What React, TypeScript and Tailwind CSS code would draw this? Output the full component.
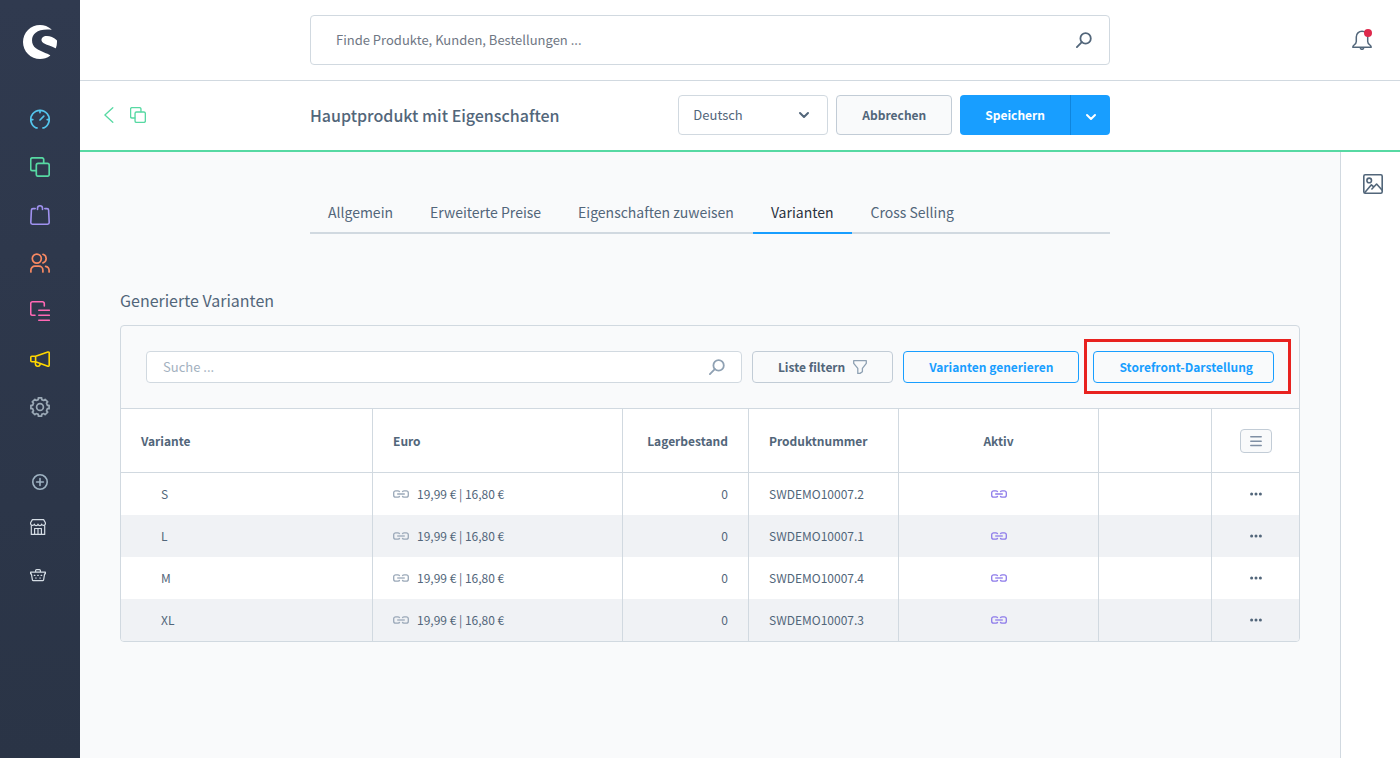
import type { ReactNode } from "react";
import { SiShopware } from "react-icons/si";

type IconProps = { className?: string };

function Svg({ box, className, width = 1.5, children }: { box: string; className?: string; width?: number; children: ReactNode }) {
  return (
    <svg
      viewBox={box}
      className={className}
      fill="none"
      stroke="currentColor"
      strokeWidth={width}
      strokeLinecap="round"
      strokeLinejoin="round"
      aria-hidden="true"
    >
      {children}
    </svg>
  );
}

const GaugeIcon = ({ className }: IconProps) => (
  <Svg box="0 0 20 20" className={className} width={1.7}>
    <path d="M7 18.9H6.2A9.2 9.2 0 1 1 13.8 18.9H13" />
    <path d="M10 1.6v2M1 10.6h1.8M17.2 10.6H19M10 11l3.8-3.8" />
  </Svg>
);

const CopyIcon = ({ className }: IconProps) => (
  <Svg box="0 0 20 20" className={className} width={1.7}>
    <path d="M6 13.7H2.5a1.8 1.8 0 0 1-1.8-1.8V2.5A1.8 1.8 0 0 1 2.5.8h9.4a1.8 1.8 0 0 1 1.8 1.8V6" />
    <rect x="6.3" y="6.3" width="12.9" height="12.9" rx="1.8" />
  </Svg>
);

const BagIcon = ({ className }: IconProps) => (
  <Svg box="0 0 20 20" className={className} width={1.6}>
    <path d="M5.2 3.6H3a1.6 1.6 0 0 0-1.6 1.5L.8 17.6A1.6 1.6 0 0 0 2.4 19.2h15.2a1.6 1.6 0 0 0 1.6-1.6l-.6-12.5A1.6 1.6 0 0 0 17 3.6h-2.2" />
    <path d="M7.5 4.4V3.2A2.5 2.5 0 0 1 10 .8a2.5 2.5 0 0 1 2.5 2.4v1.2" />
  </Svg>
);

const UsersIcon = ({ className }: IconProps) => (
  <Svg box="0 0 20 20" className={className} width={1.7}>
    <circle cx="6.8" cy="5.6" r="4.5" />
    <path d="M.9 19v-1.8a4 4 0 0 1 4-4h4a4 4 0 0 1 4 4V19M13 1.3a4.5 4.5 0 0 1 0 8.6M15.6 13.3a4.3 4.3 0 0 1 3.5 4.2V19" />
  </Svg>
);

const ContentIcon = ({ className }: IconProps) => (
  <Svg box="0 0 20 20" className={className} width={1.6}>
    <path d="M5 14.3H2.5a1.8 1.8 0 0 1-1.8-1.8V2.5A1.8 1.8 0 0 1 2.5.8h10a1.8 1.8 0 0 1 1.8 1.8V5" />
    <path d="M8.8 9.3h10.5M8.8 14.3h10.5M8.8 19.2h10.5" />
  </Svg>
);

const MegaphoneIcon = ({ className }: IconProps) => (
  <Svg box="0 0 20 20" className={className} width={1.6}>
    <path d="M5.6 7.2H1.8a1 1 0 0 0-1 1v3.6a1 1 0 0 0 1 1h3.8zM5.6 7.2 17.9 3a1 1 0 0 1 1.3 1v12.2a1 1 0 0 1-1.3 1L5.6 12.8M5.4 13v1.8a2.4 2.4 0 0 0 4.5 1.2l.2-1.4" />
  </Svg>
);

const GearIcon = ({ className }: IconProps) => (
  <Svg box="0 0 20 20" className={className} width={1.7}>
    <circle cx="10" cy="10" r="3.4" />
    <path d="M8.3.9h3.4v1.7l2.1.9 1.3-1.2 2.6 2.6-1.2 1.3.9 2.1h1.7v3.4h-1.7l-.9 2.1 1.2 1.3-2.6 2.6-1.3-1.2-2.1.9v1.7H8.3v-1.7l-2.1-.9-1.3 1.2-2.6-2.6 1.2-1.3-.9-2.1H.9V8.3h1.7l.9-2.1-1.2-1.3 2.6-2.6 1.3 1.2 2.1-.9z" />
  </Svg>
);

const PlusCircleIcon = ({ className }: IconProps) => (
  <Svg box="0 0 16 16" className={className} width={1.6}>
    <circle cx="8" cy="8" r="7.2" />
    <path d="M8 4.6v6.8M4.6 8h6.8" />
  </Svg>
);

const ShopIcon = ({ className }: IconProps) => (
  <Svg box="0 0 16 16" className={className} width={1.2}>
    <path d="M2.4.6h11.2l1.8 3.2v1a1.9 1.9 0 0 1-3.7.3 1.9 1.9 0 0 1-3.7 0 1.9 1.9 0 0 1-3.7 0A1.9 1.9 0 0 1 .6 4.8v-1zM1.3 7v8.4h13.4V7M4.6 15.4V9.5h6.8v5.9M8 9.5v5.9" />
  </Svg>
);

const BasketIcon = ({ className }: IconProps) => (
  <Svg box="0 0 16 16" className={className} width={1.2}>
    <path d="M.6 5.2h14.8v1.6h-.8l-1 6a1 1 0 0 1-1 .8H3.4a1 1 0 0 1-1-.8l-1-6H.6zM5.6 5V3.6a1 1 0 0 1 1-1h2.8a1 1 0 0 1 1 1V5" />
    <path d="M4.3 8.4h.6M7.7 8.4h.6M11.1 8.4h.6M5.6 11h.6M9.8 11h.6" />
  </Svg>
);

const SearchIcon = ({ className }: IconProps) => (
  <Svg box="0 0 16 16" className={className} width={1.8}>
    <circle cx="9.6" cy="6.4" r="5.2" />
    <path d="M5.8 10.2.9 15.1" />
  </Svg>
);

const BellIcon = ({ className }: IconProps) => (
  <Svg box="0 0 20 20" className={className}>
    <path d="M10 1.2a5.7 5.7 0 0 0-5.7 5.7v4.6c0 1.6-.9 2.5-2.2 3.5-.9.7-1.3 1.2-1.3 2.3h18.4c0-1.1-.4-1.6-1.3-2.3-1.3-1-2.2-1.9-2.2-3.5V6.9A5.7 5.7 0 0 0 10 1.2zM8.3 17.6a1.7 1.7 0 0 0 3.4 0" />
  </Svg>
);

const ImageIcon = ({ className }: IconProps) => (
  <Svg box="0 0 20 20" className={className} width={1.6}>
    <rect x=".8" y=".8" width="18.4" height="18.4" rx="1.4" />
    <circle cx="6.2" cy="6.4" r="2.3" />
    <path d="m1.8 18.4 6.6-7.6 2 1.8M8.9 15l4.7-5 5.4 6" />
  </Svg>
);

const ChevronIcon = ({ className }: IconProps) => (
  <Svg box="0 0 12 8" className={className} width={2}>
    <path d="m2 2 4 4 4-4" />
  </Svg>
);

const BackIcon = ({ className }: IconProps) => (
  <Svg box="0 0 10 16" className={className} width={1.3}>
    <path d="M8.8.8.9 8l7.9 7.2" />
  </Svg>
);

const FilterIcon = ({ className }: IconProps) => (
  <Svg box="0 0 14 14" className={className} width={1.3}>
    <path d="M.7.7h12.6v2.7L9.4 8.4v3.4L7 13.4H4.8v-5L.7 3.4z" />
  </Svg>
);

const LinkIcon = ({ className }: IconProps) => (
  <svg viewBox="0 0 16 8" className={className} fill="none" stroke="currentColor" strokeWidth="1.3" aria-hidden="true">
    <path d="M6.6 2.2A1.6 1.6 0 0 0 5 .8H2.7A2 2 0 0 0 .7 2.8v2.4a2 2 0 0 0 2 2H5a1.6 1.6 0 0 0 1.6-1.4" />
    <path d="M9.4 2.2A1.6 1.6 0 0 1 11 .8h2.3a2 2 0 0 1 2 2v2.4a2 2 0 0 1-2 2H11a1.6 1.6 0 0 1-1.6-1.4" />
    <path d="M4.2 4h7.6" />
  </svg>
);

const mainNav = [
  { label: "Übersicht", icon: GaugeIcon, color: "text-[#54c5ec]" },
  { label: "Kataloge", icon: CopyIcon, color: "text-[#57d9a3]" },
  { label: "Bestellungen", icon: BagIcon, color: "text-[#a092f0]" },
  { label: "Kunden", icon: UsersIcon, color: "text-[#f88962]" },
  { label: "Inhalte", icon: ContentIcon, color: "text-[#ff68b4]" },
  { label: "Marketing", icon: MegaphoneIcon, color: "text-[#ffd700]" },
  { label: "Einstellungen", icon: GearIcon, color: "text-[#9aa8b5]" },
];

const tabs = ["Allgemein", "Erweiterte Preise", "Eigenschaften zuweisen", "Varianten", "Cross Selling"];

const variants = [
  { name: "S", number: "SWDEMO10007.2" },
  { name: "L", number: "SWDEMO10007.1" },
  { name: "M", number: "SWDEMO10007.4" },
  { name: "XL", number: "SWDEMO10007.3" },
];

const headCell = "border-r border-b border-[#d1d9e0] px-5 font-bold last:border-r-0";
const cell = "border-r border-[#d1d9e0] px-5 last:border-r-0";

function Sidebar() {
  return (
    <nav aria-label="Hauptmenü" className="flex w-20 shrink-0 flex-col bg-linear-to-b from-[#303a4f] to-[#2a3446]">
      <a href="#start" aria-label="Startseite" className="flex h-[95px] justify-center pt-[25px] text-white">
        <SiShopware className="size-[34px]" />
      </a>
      {mainNav.map(({ label, icon: Icon, color }) => (
        <a key={label} href={"#" + label} aria-label={label} className={"flex h-12 items-center justify-center " + color}>
          <Icon className="size-5" />
        </a>
      ))}
      <a href="#kanal" aria-label="Verkaufskanal hinzufügen" className="mt-[30px] flex h-[42px] items-center justify-center text-[#9fb3c3]">
        <PlusCircleIcon className="size-4" />
      </a>
      <a href="#shop" aria-label="Shop" className="flex h-12 items-center pl-[30px] text-[#d5dde5]">
        <ShopIcon className="size-4" />
      </a>
      <a href="#headless" aria-label="Headless" className="flex h-12 items-center pl-[30px] text-[#d5dde5]">
        <BasketIcon className="size-4" />
      </a>
    </nav>
  );
}

function TopBar() {
  return (
    <header className="grid h-[81px] grid-cols-[1fr_minmax(0,800px)_1fr_60px] items-center border-b border-[#d1d9e0] bg-white">
      <div className="col-start-2 flex h-[50px] items-center rounded border border-[#d1d9e0] pr-[17px] pl-[25px]">
        <input
          type="search"
          aria-label="Suche"
          placeholder="Finde Produkte, Kunden, Bestellungen ..."
          className="min-w-0 flex-1 text-[13px] outline-none placeholder:text-[#6f7784]"
        />
        <button type="button" aria-label="Suchen">
          <SearchIcon className="size-4" />
        </button>
      </div>
      <button type="button" aria-label="Benachrichtigungen" className="relative col-start-4 ml-3 size-5">
        <BellIcon className="size-5" />
        <span className="absolute -top-px right-0 size-2 rounded-full bg-[#de294c]" />
      </button>
    </header>
  );
}

function PageHead() {
  return (
    <div className="grid h-[71px] grid-cols-[1fr_minmax(0,800px)_1fr_60px] items-center border-b-2 border-[#57d9a3] bg-white pb-px">
      <div className="flex items-center gap-4 pl-6 text-[#57d9a3]">
        <a href="#zurueck" aria-label="Zurück">
          <BackIcon className="h-4 w-2.5" />
        </a>
        <CopyIcon className="size-4" />
      </div>
      <div className="flex items-center gap-2">
        <h1 className="flex-1 text-base font-medium">Hauptprodukt mit Eigenschaften</h1>
        <div className="relative">
          <select aria-label="Sprache" className="h-10 w-[150px] appearance-none rounded border border-[#d1d9e0] bg-white pl-3.5 text-[13px]">
            <option>Deutsch</option>
          </select>
          <ChevronIcon className="pointer-events-none absolute top-4 right-[18px] h-2 w-3" />
        </div>
        <button type="button" className="h-10 rounded border border-[#c2ccd6] bg-[#f9fafb] px-[25px] text-xs font-bold">
          Abbrechen
        </button>
        <div className="flex">
          <button type="button" className="h-10 rounded-l bg-[#189eff] px-[25px] text-xs font-bold text-white">
            Speichern
          </button>
          <button
            type="button"
            aria-label="Weitere Speicheroptionen"
            className="flex h-10 w-10 items-center justify-center rounded-r border-l border-[#0f85dd] bg-[#189eff] pt-1 text-white"
          >
            <ChevronIcon className="h-2 w-3" />
          </button>
        </div>
      </div>
    </div>
  );
}

function Toolbar() {
  return (
    <div className="flex items-center gap-2.5 border-b border-[#d1d9e0] px-[25px] py-[25px]">
      <div className="flex h-8 min-w-0 flex-1 items-center rounded border border-[#d1d9e0] bg-white px-4">
        <input
          type="search"
          aria-label="Varianten suchen"
          placeholder="Suche ..."
          className="min-w-0 flex-1 text-[13px] outline-none placeholder:text-[#a3b1c0]"
        />
        <SearchIcon className="size-4 text-[#8fa1b3]" />
      </div>
      <button type="button" className="flex h-8 items-center gap-2 rounded border border-[#c2ccd6] px-[25px] text-xs font-bold">
        Liste filtern
        <FilterIcon className="size-3.5 text-[#8fa1b3]" />
      </button>
      <button type="button" className="h-8 rounded border border-[#189eff] px-[25px] text-xs font-bold text-[#189eff]">
        Varianten generieren
      </button>
      <div className="relative ml-1">
        <button type="button" className="h-8 rounded border border-[#189eff] pr-5 pl-[25px] text-xs font-bold text-[#189eff]">
          Storefront-Darstellung
        </button>
        <div className="pointer-events-none absolute -top-3 -right-[17px] -bottom-[11px] -left-[9px] border-3 border-[#e8221f]" />
      </div>
    </div>
  );
}

function VariantTable() {
  return (
    <table className="w-full table-fixed border-separate border-spacing-0 text-left text-xs">
      <colgroup>
        <col />
        <col className="w-[250px]" />
        <col className="w-[126px]" />
        <col className="w-[150px]" />
        <col className="w-[200px]" />
        <col className="w-[113px]" />
        <col className="w-[87px]" />
      </colgroup>
      <thead>
        <tr className="h-16 bg-white">
          <th className={headCell}>Variante</th>
          <th className={headCell}>Euro</th>
          <th className={headCell + " text-right"}>Lagerbestand</th>
          <th className={headCell}>Produktnummer</th>
          <th className={headCell + " text-center"}>Aktiv</th>
          <td className={headCell} />
          <th className={headCell}>
            <button
              type="button"
              aria-label="Spalten"
              className="mx-auto flex h-6 w-8 items-center justify-center rounded border border-[#c2ccd6] bg-[#f9fafb] text-[#7f8fa4]"
            >
              <Svg box="0 0 12 12" className="size-3" width={1.5}>
                <path d="M.8 1.8h10.4M.8 6.2h10.4M.8 10.6h10.4" />
              </Svg>
            </button>
          </th>
        </tr>
      </thead>
      <tbody>
        {variants.map((v) => (
          <tr key={v.name} className="h-[42px] bg-white even:bg-[#f0f2f5]">
            <td className={cell}>
              <span className="pl-5">{v.name}</span>
            </td>
            <td className={cell}>
              <span className="flex items-center gap-2">
                <LinkIcon className="h-2 w-4 text-[#9aa8b8]" />
                19,99 € | 16,80 €
              </span>
            </td>
            <td className={cell + " text-right"}>0</td>
            <td className={cell}>{v.number}</td>
            <td className={cell}>
              <LinkIcon className="mx-auto h-2 w-4 text-[#8d7bea]" />
            </td>
            <td className={cell} />
            <td className={cell}>
              <button type="button" aria-label={"Aktionen für " + v.name} className="mx-auto flex h-5 items-center">
                <svg viewBox="0 0 12 4" className="h-1 w-3" fill="currentColor" aria-hidden="true">
                  <circle cx="1.6" cy="2" r="1.5" />
                  <circle cx="6" cy="2" r="1.5" />
                  <circle cx="10.4" cy="2" r="1.5" />
                </svg>
              </button>
            </td>
          </tr>
        ))}
      </tbody>
    </table>
  );
}

export default function App() {
  return (
    <div className="flex min-h-screen bg-[#f9fafb] font-['Noto_Sans_CJK_SC',sans-serif] text-[#52667a]">
      <Sidebar />
      <div className="flex min-w-0 flex-1 flex-col">
        <TopBar />
        <PageHead />
        <div className="flex flex-1">
          <main className="min-w-0 flex-1 px-10 pt-10">
            <div role="tablist" className="mx-auto flex max-w-[800px] gap-px border-b-2 border-[#d1d9e0]">
              {tabs.map((tab) => (
                <button
                  key={tab}
                  type="button"
                  role="tab"
                  aria-selected={tab === "Varianten"}
                  className="-mb-0.5 h-[42px] border-b-2 border-transparent px-[18px] text-sm aria-selected:border-[#189eff] aria-selected:text-[#2b3240]"
                >
                  {tab}
                </button>
              ))}
            </div>
            <h2 className="mt-[54px] text-base leading-6">Generierte Varianten</h2>
            <section className="mt-[13px] overflow-hidden rounded border border-[#d1d9e0]">
              <Toolbar />
              <VariantTable />
            </section>
          </main>
          <aside className="w-[60px] shrink-0 border-l border-[#d1d9e0] bg-white pt-[22px] pl-[22px]">
            <button type="button" aria-label="Medien" className="block">
              <ImageIcon className="size-5" />
            </button>
          </aside>
        </div>
      </div>
    </div>
  );
}
